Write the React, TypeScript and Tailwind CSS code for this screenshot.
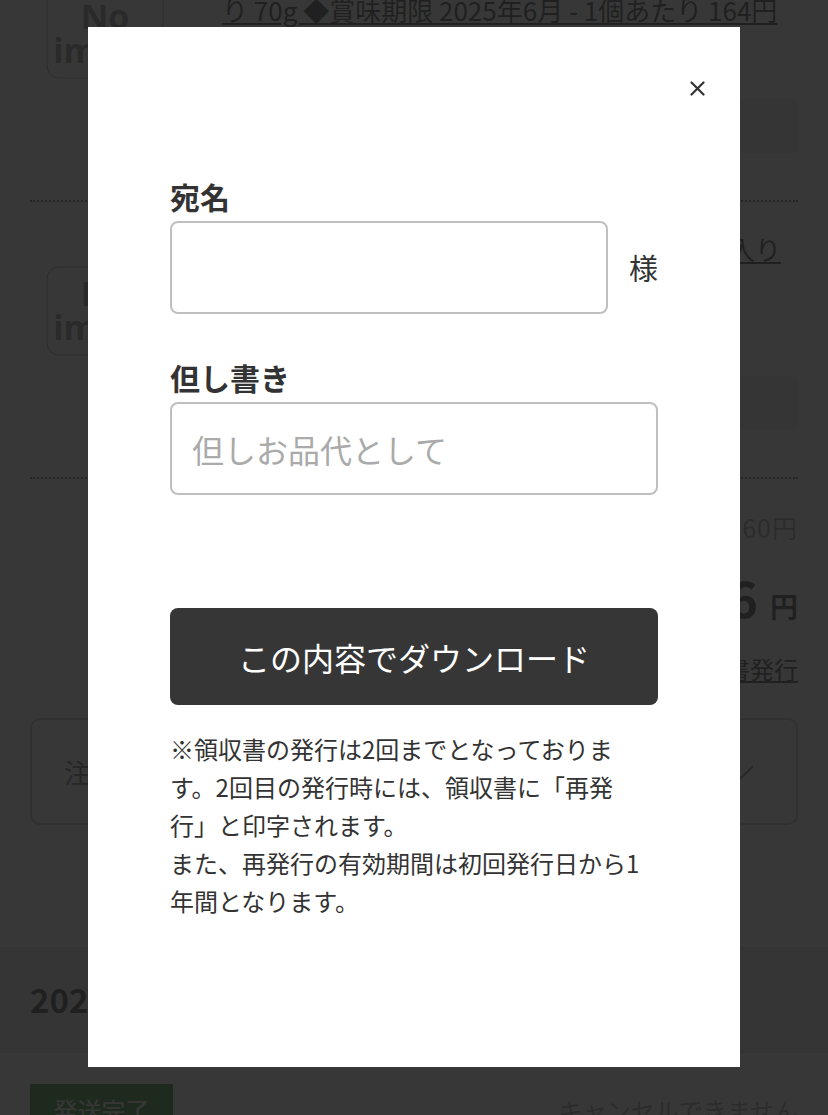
import React from "react";

function NoImage() {
  return (
    <div className="relative w-[150px] h-[160px] shrink-0 flex flex-col items-center justify-center">
      <svg className="absolute left-[16px] top-[36px]" width="118" height="90" viewBox="0 0 118 90">
        <rect x="1" y="1" width="116" height="88" rx="12" fill="none" stroke="#9a9a9a" strokeWidth="1" />
      </svg>
      <span className="relative font-['Open_Sans',sans-serif] font-bold text-[34px] leading-[34px] text-[#8a8a8a]">No</span>
      <span className="relative font-['Open_Sans',sans-serif] font-bold text-[34px] leading-[34px] text-[#8a8a8a]">image</span>
    </div>
  );
}

function Item({ lines, price, alignFirst }: { lines: string[]; price: string; alignFirst?: boolean }) {
  return (
    <div className="flex gap-[42px] pt-[28px] pb-[47px] border-b-2 border-dotted border-[#5a5a5a]">
      <NoImage />
      <div className="flex-1 min-w-0">
        <a href="#" className="block text-[26px] leading-[38px] text-[#333] underline">
          {lines.map((l, i) => (
            <span
              key={i}
              className={
                i === 0 && alignFirst
                  ? "block whitespace-nowrap text-right pr-[17px]"
                  : "block whitespace-nowrap"
              }
            >
              {l}
            </span>
          ))}
        </a>
        <p className="text-[24px] leading-[38px] text-[#333]">{price}</p>
        <div className="mt-[32px] h-[54px] rounded-[6px] bg-[#e6e6e6]" />
      </div>
    </div>
  );
}

export default function App() {
  return (
    <div className="relative min-h-[1115px] overflow-hidden bg-white font-['Noto_Sans_CJK_JP','Noto_Sans',sans-serif]">
      {/* underlying page */}
      <div className="-mt-[75px]">
        <div className="px-[30px]">
          <Item
            lines={["【まとめ買い】国産ミックスナッツ 小袋入", "り 70g ◆賞味期限 2025年6月 - 1個あたり 164円"]}
            price="1,640円 × 1"
          />
          <Item
            lines={["【送料無料】素焼きアーモンド 徳用 12袋入り", "◆賞味期限 2025年8月"]}
            price="1,620円 × 1"
            alignFirst
          />
          <div className="mt-[29px] text-right text-[25px] leading-[38px] tracking-[1px] text-[#999]">小計 3,160円</div>
          <div className="mt-[20px] flex items-baseline justify-end text-[#333]">
            <span className="mr-[16px] text-[24px] font-bold">合計</span>
            <span className="text-[50px] leading-[60px] font-bold">3,926</span>
            <span className="ml-[12px] text-[28px] font-bold">円</span>
          </div>
          <div className="mt-[23px] text-right text-[24px] leading-[38px]">
            <a href="#" className="text-[#333] underline">領収書発行</a>
          </div>
          <div className="mt-[30px] h-[107px] rounded-[10px] border-2 border-[#bbbbbb] flex items-center justify-between pl-[32px] pr-[42px]">
            <span className="text-[26px] text-[#666]">注文内容の詳細を見る</span>
            <svg width="26" height="14" viewBox="0 0 26 14">
              <polyline points="1,1 13,13 25,1" fill="none" stroke="#777" strokeWidth="2" />
            </svg>
          </div>
        </div>
        <div className="mt-[122px] h-[106px] border-t border-b border-[#d6d6d6] bg-[#e8e8e8] flex items-center px-[30px]">
          <span className="text-[33px] font-bold text-[#333]">2024/12/18</span>
        </div>
        <div className="px-[30px] pt-[31px] flex items-center justify-between">
          <div className="w-[143px] h-[52px] bg-[#2a8a22] flex items-center justify-center text-white text-[24px]">
            発送完了
          </div>
          <span className="text-[24px] text-[#999]">キャンセルできません</span>
        </div>
      </div>

      {/* overlay + modal */}
      <div className="fixed inset-0 bg-[rgba(30,30,30,0.89)] flex justify-center items-start pt-[27px]">
        <div className="w-[652px] h-[1040px] bg-white">
          <div className="flex justify-end pt-[54px] pr-[35px]">
            <button type="button" aria-label="閉じる" className="block">
              <svg width="15" height="15" viewBox="0 0 15 15" className="block">
                <path d="M1.5 1.5 L13.5 13.5 M13.5 1.5 L1.5 13.5" stroke="#333" strokeWidth="2.2" strokeLinecap="round" />
              </svg>
            </button>
          </div>
          <div className="px-[82px] pt-[80px]">
            <label className="block text-[30px] leading-[41px] pb-[4px] font-bold text-[#333]">宛名</label>
            <div className="flex items-center gap-[21px]">
              <input
                type="text"
                className="min-w-0 flex-1 h-[93px] rounded-[8px] border-2 border-[#bfbfbf] px-5 text-[32px] text-[#333] outline-none"
              />
              <span className="text-[29px] leading-none text-[#333]">様</span>
            </div>
            <label className="mt-[43px] block text-[30px] leading-[41px] pb-[4px] font-bold text-[#333]">但し書き</label>
            <input
              type="text"
              placeholder="但しお品代として"
              className="block w-full h-[93px] rounded-[8px] border-2 border-[#bfbfbf] px-5 text-[32px] text-[#333] placeholder:text-[#aaaaaa] outline-none"
            />
            <button
              type="button"
              className="mt-[113px] block w-full h-[97px] rounded-[8px] bg-[#363636] text-white text-[32px]"
            >
              この内容でダウンロード
            </button>
            <p className="mt-[25px] pr-[10px] text-[24px] leading-[38px] text-[#333] [text-spacing-trim:space-all]">
              ※領収書の発行は2回までとなっております。2回目の発行時には、領収書に「再発行」と印字されます。
              <br />
              また、再発行の有効期間は初回発行日から1年間となります。
            </p>
          </div>
        </div>
      </div>
    </div>
  );
}
